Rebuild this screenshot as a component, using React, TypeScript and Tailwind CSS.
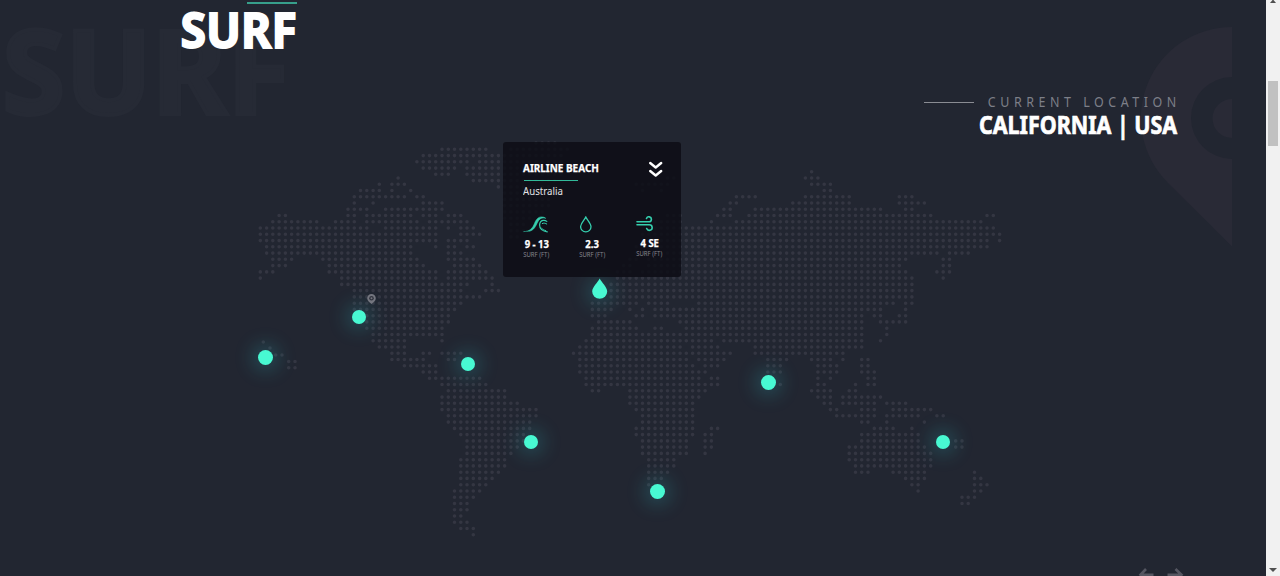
import React from "react";

const PITCH_X = 6.265;
const PITCH_Y = 6.26;

// Each row: [row index, "start-end" column ranges]
const LAND: [number, string][] = [
  [0, "88"],
  [1, "22 65-66 87-89"],
  [2, "19 21-23 60-65 88-91"],
  [3, "16-19 21 24 61 64 90-91"],
  [4, "15-23 25-26 76-79 87-94 102-104"],
  [5, "15 18 26-29 75-76 85-94 102-106"],
  [6, "14-17 20-29 74-75 79-99 103-104"],
  [7, "3-4 14-15 17-24 26-28 30-32 65-67 73-75 78-107 116-117"],
  [8, "2-9 12-15 17-25 27-33 63-67 72 76-115"],
  [9, "0-17 20-28 30 32-34 62-117"],
  [10, "0-28 32-35 61-118"],
  [11, "0-28 30-33 61-116 118"],
  [12, "1-24 28 30-31 33-34 60-116"],
  [13, "1-24 30-32 60-108 110-113"],
  [14, "2-5 10-25 30-34 59-60 62-103 109-110"],
  [15, "2-4 11-26 31-35 58-59 62-102 109-110"],
  [16, "0-2 11-28 30-36 57-59 61-103 108-110"],
  [17, "0 13-28 30-37 57-104 109"],
  [18, "13-33 37 56-104"],
  [19, "15-32 36-38 56-104"],
  [20, "15-35 56-104"],
  [21, "15-32 53-60 62-65 70-101 103-104"],
  [22, "15-31 53-56 59 61 63-99 103"],
  [23, "17-30 53-55 60-61 63-96 98-99 102-103"],
  [24, "17-30 54-59 67-96 99-103"],
  [25, "17-29 53-60 63-64 68-96 100"],
  [26, "18-29 53-96 100"],
  [27, "18-23 29 52-72 74-96 99"],
  [28, "19-23 51-67 69-73 79-96"],
  [29, "21-23 26-27 29-32 50-75 79-93"],
  [30, "21-26 30-31 51-68 70-74 81-84 88-91 93 96-97"],
  [31, "23-28 51-69 71-73 81-83 89-92 96-97"],
  [32, "26-28 51-71 81-83 89-92 96-98"],
  [33, "27-35 52-70 72-73 89 91 97-98"],
  [34, "29-36 52-73 83 89-90 95 97-98"],
  [35, "30-39 53-54 59-71 88-91 94-95"],
  [36, "29-39 59-70 89-91 93-99"],
  [37, "29-41 59-69 90-91 93-98 100-103"],
  [38, "29-44 60-69 91-92 96-98 101-107"],
  [39, "30-44 61-69 92-98 100-105 108-109"],
  [40, "30-43 61-69 96-97 100 106"],
  [41, "31-43 60-69 72-73 98-101 104"],
  [42, "32-42 60-69 71-72 96-105"],
  [43, "33-42 61-68 71-72 96-105 111-112"],
  [44, "33-41 61-68 71-72 94-106 111-112"],
  [45, "33-40 61-68 71 94-107"],
  [46, "32-39 62-66 94-107"],
  [47, "32-39 62-66 95-107"],
  [48, "32-38 62-65 95-97 101-106 114"],
  [49, "32-37 62-64 103-106 114-115"],
  [50, "32-36 62 104-105 114-116"],
  [51, "31-35 105 114-115"],
  [52, "31-34 112-114"],
  [53, "31-33 112-113"],
  [54, "31-33"],
  [55, "31-32"],
  [56, "31-33"],
  [57, "32-34"],
  [58, "34"],
];

const GREENLAND: [number, string][] = [
  [-1, "44-47"],
  [0, "29-36 40-49"],
  [1, "26-48"],
  [2, "25-33 35-48"],
  [3, "26-31 33-48"],
  [4, "28-30 33-48"],
  [5, "34-48"],
  [6, "38-47"],
  [7, "39-47"],
  [8, "39-46"],
  [9, "39-46"],
  [10, "39-45"],
  [11, "39-43"],
  [12, "40-42"],
  [13, "40-42"],
  [14, "40-41"],
];

const HAWAII: [number, number][] = [
  [263.3, 342], [270, 348], [275.7, 355], [282, 355],
  [288.7, 361.5], [295, 361.5], [288.7, 367.7], [295, 367.7],
];

function expand(rows: [number, string][], top: number): [number, number][] {
  const out: [number, number][] = [];
  for (const [row, spec] of rows) {
    for (const part of spec.split(" ")) {
      const range = part.split("-").map(Number);
      const a = range[0];
      const b = range[1] ?? a;
      for (let c = a; c <= b; c++) out.push([260.3 + c * PITCH_X, top + row * PITCH_Y]);
    }
  }
  return out;
}

const DOTS = [...expand(LAND, 171.7), ...expand(GREENLAND, 149.3), ...HAWAII];
const DOT_PATH = DOTS.map(([x, y]) => `M${x.toFixed(1)} ${y.toFixed(1)}h.01`).join("");

function DottedMap() {
  return (
    <svg className="absolute inset-0" width="1266" height="576" viewBox="0 0 1266 576">
      <path d={DOT_PATH} stroke="#343642" strokeWidth="3.6" strokeLinecap="round" fill="none" />
    </svg>
  );
}

function Spot({ className }: { className: string }) {
  return (
    <span
      className={`absolute rounded-full bg-[#48f9d2] shadow-[0_0_20px_4px_rgba(50,190,200,0.33)] ${className}`}
    />
  );
}

function DropMarker() {
  return (
    <div className="absolute left-[592px] top-[277px] h-[23px] w-[16px]">
      <span className="absolute left-[1px] top-[8px] size-[14px] rounded-full shadow-[0_0_20px_4px_rgba(50,190,200,0.33)]" />
      <svg className="relative" width="16" height="23" viewBox="0 0 16 23">
        <path d="M7.7 1.5C9.6 5.4 15.2 10 15.2 14.6a7.5 7.2 0 0 1-15 0C.2 10 5.8 5.4 7.7 1.5Z" fill="#48f9d2" />
      </svg>
    </div>
  );
}

function WaveIcon() {
  return (
    <svg width="26" height="17" viewBox="0 0 26 17" fill="none" stroke="#35cfae" strokeLinecap="round">
      <path d="M.8 15.6C7 15.6 9.6 12.2 11.6 7.2 13 3.6 15.2 1 18.4.9c1.8 0 3.3.5 4.3 1.4-3-.9-5.9-.4-8 3.7C12.8 9.7 11.3 14.5 6 15.3" strokeWidth=".6" fill="#35cfae" />
      <path d="M24.3 15.8C19.5 15.5 16.5 12.6 16.6 9c.1-2.6 1.5-4.2 3.4-4.6 1.5-.3 2.8.2 3.8 1" strokeWidth="1.2" />
      <path d="M19.3 7.5c1.6-.8 3.1-.3 4.4.5M18.8 12.4c1.2 1.3 2.6 1.9 4 2.3" strokeWidth="1" />
    </svg>
  );
}

function DropIcon() {
  return (
    <svg className="ml-px" width="12" height="17" viewBox="0 0 12 17" fill="none" stroke="#35cfae" strokeWidth="1.3">
      <path d="M5.8 1C7.2 4 11 7.2 11 10.8a5.2 5.1 0 0 1-10.4 0C.6 7.2 4.4 4 5.8 1Z" />
    </svg>
  );
}

function WindIcon() {
  return (
    <svg className="mt-px" width="17" height="16" viewBox="0 0 17 16" fill="none" stroke="#35cfae" strokeWidth="1.6" strokeLinecap="round">
      <path d="M1 5.8h11.9a2.5 2.5 0 1 0-2.4-3.3" />
      <path d="M1 8.8h12.4a2.8 2.8 0 1 1-2.7 3.7" />
    </svg>
  );
}

function Stat({ icon, value, className }: { icon: React.ReactNode; value: string; className: string }) {
  return (
    <div className={`flex w-[27px] flex-col ${className}`}>
      <div className="h-[20px]">{icon}</div>
      <div className="flex h-[15px] items-center justify-center whitespace-nowrap text-[10px] font-bold leading-none text-white">
        <span className="scale-x-[0.95] [-webkit-text-stroke:0.25px_#fff]">{value}</span>
      </div>
      <div className="flex h-[8px] items-center justify-center whitespace-nowrap text-[6.5px] leading-none text-[#85858d]">
        <span className="scale-x-[0.92]">SURF (FT)</span>
      </div>
    </div>
  );
}

function BeachCard() {
  return (
    <section className="absolute left-[503px] top-[142px] h-[135px] w-[178px] rounded-[3px] bg-[#0d0d15]/85 pl-[20px] pr-[17px] pt-[19px]">
      <div className="flex items-start justify-between">
        <div className="flex flex-col items-start">
          <h3 className="h-[14px] origin-left scale-x-[0.89] whitespace-nowrap text-[11.2px] font-bold leading-[14px] text-white [-webkit-text-stroke:0.25px_#fff]">
            AIRLINE BEACH
          </h3>
          <span className="ml-px mt-[5px] h-px w-[54px] bg-[#32b999]" />
          <p className="mt-[4px] origin-left scale-x-[0.92] text-[10.5px] leading-[12px] text-[#e3e3e6]">Australia</p>
        </div>
        <svg width="16" height="18" viewBox="0 0 16 18" fill="none" stroke="#fff" strokeWidth="2.4">
          <path d="M2.2 2 7.7 6.5l5.5-4.5M2.2 10 7.7 14.5l5.5-4.5" strokeLinecap="round" strokeLinejoin="round" />
        </svg>
      </div>
      <div className="mt-[19px] flex items-start">
        <Stat icon={<WaveIcon />} value="9 - 13" className="" />
        <Stat icon={<DropIcon />} value="2.3" className="ml-[29px]" />
        <Stat icon={<WindIcon />} value="4 SE" className="-mt-px ml-[30px]" />
      </div>
    </section>
  );
}

function Scrollbar() {
  return (
    <aside className="flex h-full w-[14px] shrink-0 flex-col items-center bg-[#f1f1f1]">
      <svg width="8" height="3" viewBox="0 0 8 3"><path d="M1 3 3.5 0h1L7 3Z" fill="#505050" /></svg>
      <div className="mt-[78px] h-[65px] w-[10px] bg-[#c1c1c1]" />
      <svg className="mb-[4px] mt-auto" width="8" height="4" viewBox="0 0 8 4"><path d="M0 0h8L4 4Z" fill="#505050" /></svg>
    </aside>
  );
}

export default function App() {
  return (
    <div className="flex h-[576px] w-[1280px] overflow-hidden bg-[#222631] font-['Noto_Sans','Open_Sans',sans-serif]">
      <main className="relative h-full w-[1266px] overflow-hidden">
        <div className="absolute left-[2px] top-[7px] origin-left scale-x-[0.98] whitespace-nowrap text-[117px] font-bold leading-[124px] text-[#262a35] [-webkit-text-stroke:4px_#262a35]">
          SURF
        </div>
        <svg className="absolute left-[1140px] top-[26px]" width="92" height="221" viewBox="0 0 92 221">
          <path
            fillRule="evenodd"
            fill="#292a36"
            d="M92 1A91 91 0 0 0 27.6 156.4L92 220.5V133A41 41 0 0 1 92 51ZM92 73A19.5 19.5 0 0 0 92 112Z"
          />
        </svg>
        <DottedMap />

        <div className="relative flex h-full flex-col">
          <header className="flex w-[297px] flex-col items-end pt-[2px]">
            <span className="h-[2px] w-[50px] bg-[#379f8b]" />
            <h1 className="-mt-px h-[52px] origin-right scale-x-[0.955] whitespace-nowrap text-[48.5px] font-bold leading-[52px] text-white [-webkit-text-stroke:1.8px_#fff]">
              SURF
            </h1>
          </header>
          <div className="mt-[38px] flex w-[1181px] flex-col items-end">
            <div className="flex h-[18px] w-[257px] items-center justify-between">
              <span className="h-px w-[50px] shrink-0 bg-[#8a8c93]" />
              <div className="flex w-[193px] justify-end">
                <span className="origin-right scale-x-[0.89] whitespace-nowrap text-[14px] leading-[18px] tracking-[5.1px] text-[#7d7f88]">
                  CURRENT LOCATION
                </span>
              </div>
            </div>
            <h2 className="-mt-px mr-[4px] h-[28px] origin-right scale-x-[0.865] whitespace-nowrap text-[24.8px] font-bold leading-[29px] text-white [-webkit-text-stroke:0.7px_#fff]">
              CALIFORNIA | USA
            </h2>
          </div>
        </div>

        <Spot className="left-[258px] top-[350px] size-[14.5px]" />
        <Spot className="left-[352px] top-[310px] size-[14.3px]" />
        <Spot className="left-[461px] top-[357px] size-[14px]" />
        <Spot className="left-[761px] top-[375px] size-[15px]" />
        <Spot className="left-[524px] top-[434.5px] size-[14px]" />
        <Spot className="left-[650px] top-[484px] size-[15px]" />
        <Spot className="left-[936px] top-[434.5px] size-[14px]" />
        <svg className="absolute left-[366px] top-[293px]" width="11" height="12" viewBox="0 0 11 12">
          <path d="M5.5 1a4.3 4.3 0 0 1 4.3 4.3C9.8 8 7.5 9.5 5.5 11 3.5 9.5 1.2 8 1.2 5.3A4.3 4.3 0 0 1 5.5 1Z" fill="#74767f" />
          <circle cx="5.5" cy="5.3" r="2.3" fill="#30333e" />
          <circle cx="5.5" cy="5.3" r="1" fill="#74767f" />
        </svg>
        <DropMarker />
        <BeachCard />

        <svg className="absolute left-[1138px] top-[567px]" width="46" height="9" viewBox="0 0 46 9" fill="none" stroke="#555661" strokeWidth="2.6">
          <path d="M8 2 2.5 7.8l6 6M2 7.8h13.5M37.5 2l6 5.8-6 6M43 7.8H29.5" />
        </svg>
      </main>
      <Scrollbar />
    </div>
  );
}
